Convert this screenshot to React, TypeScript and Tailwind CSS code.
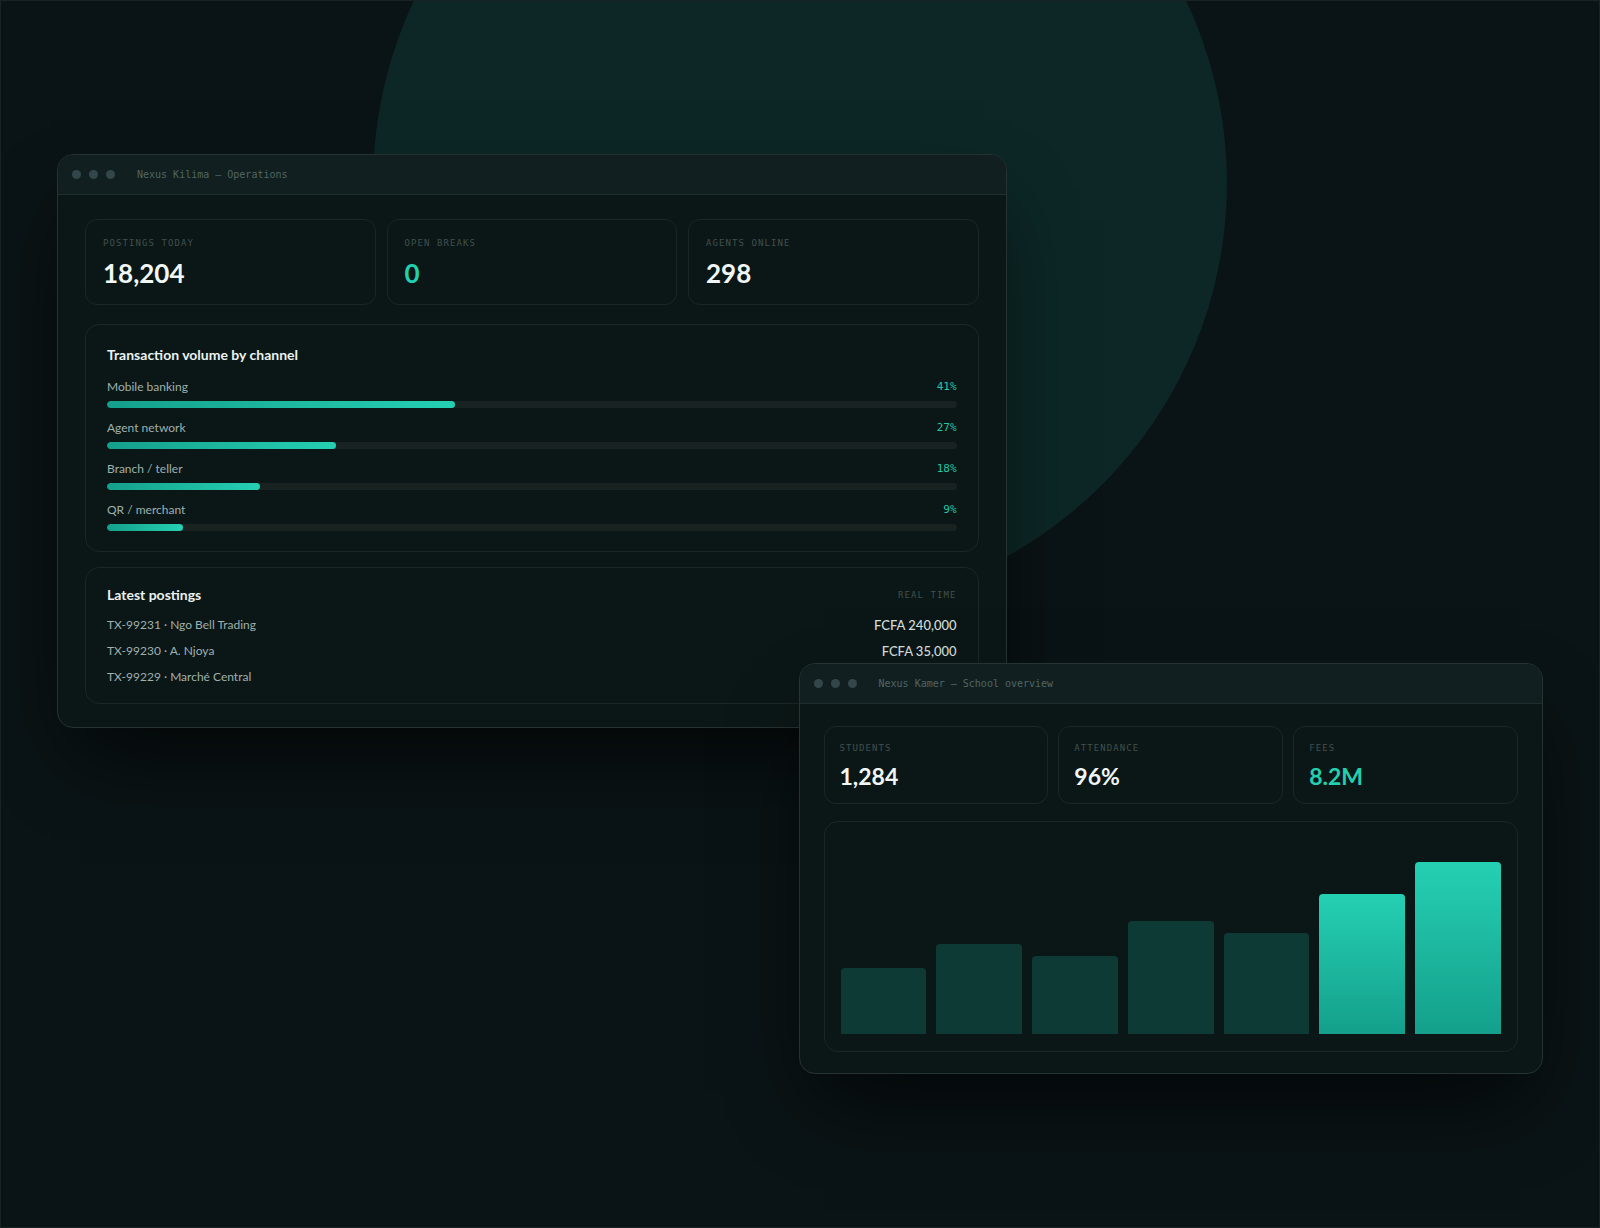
import type { ReactNode } from "react";
import clsx from "clsx";

interface WindowProps {
  title: string;
  className?: string;
  children: ReactNode;
}

interface StatProps {
  label: string;
  value: string;
  accent?: boolean;
  compact?: boolean;
}

const channels = [
  { name: "Mobile banking", share: 41 },
  { name: "Agent network", share: 27 },
  { name: "Branch / teller", share: 18 },
  { name: "QR / merchant", share: 9 },
];

const postings = [
  { id: "TX-99231", party: "Ngo Bell Trading", amount: "FCFA 240,000" },
  { id: "TX-99230", party: "A. Njoya", amount: "FCFA 35,000" },
  { id: "TX-99229", party: "Marché Central" },
];

const bars = [
  { height: 34 },
  { height: 46 },
  { height: 40 },
  { height: 58 },
  { height: 52 },
  { height: 72, active: true },
  { height: 88, active: true },
];

function Window({ title, className, children }: WindowProps) {
  return (
    <section
      className={clsx(
        "relative overflow-hidden rounded-2xl border border-[#253332] bg-[#0b1716] shadow-[0_40px_80px_-24px_rgba(0,0,0,0.8)]",
        className
      )}
    >
      <header className="flex h-10 items-center border-b border-[#1f2d2c] bg-[#121f20] px-[14px]">
        <div className="flex gap-2">
          <span className="size-[9px] rounded-full bg-[#33474a]" />
          <span className="size-[9px] rounded-full bg-[#33474a]" />
          <span className="size-[9px] rounded-full bg-[#33474a]" />
        </div>
        <h2 className="ml-[22px] font-['DejaVu_Sans_Mono',monospace] text-[10px] leading-4 text-[#4f6663]">
          {title}
        </h2>
      </header>
      {children}
    </section>
  );
}

function Stat({ label, value, accent, compact }: StatProps) {
  return (
    <div
      className={clsx(
        "flex flex-1 flex-col gap-[10px] rounded-xl border border-[#1a2726]",
        compact ? "p-[15px]" : "p-[17px]"
      )}
    >
      <dt className="font-['DejaVu_Sans_Mono',monospace] text-[9px] leading-3 tracking-[0.12em] text-[#40504e] uppercase">
        {label}
      </dt>
      <dd
        className={clsx(
          "font-bold",
          compact ? "text-[23px] leading-6" : "text-[26px] leading-7",
          accent ? "text-[#22d0b0]" : "text-[#f1f7f6]"
        )}
      >
        {value}
      </dd>
    </div>
  );
}

function Channel({ name, share }: { name: string; share: number }) {
  return (
    <li>
      <div className="flex justify-between text-xs leading-[18px]">
        <span className="text-[#9fb0ae]">{name}</span>
        <span className="font-['DejaVu_Sans_Mono',monospace] text-[11px] text-[#20c7a9]">
          {share}%
        </span>
      </div>
      <div className="mt-[5px] h-[7px] overflow-hidden rounded-full bg-[#172221]">
        <div
          className="h-full rounded-full bg-linear-to-r from-[#14a08b] to-[#25d0b2]"
          style={{ width: `${share}%` }}
        />
      </div>
    </li>
  );
}

export default function App() {
  return (
    <main className="relative flex min-h-screen flex-col overflow-hidden border border-[#182424] bg-[#0a1315] px-14 py-[153px] font-['Lato',sans-serif]">
      <div className="absolute top-[-20%] left-1/2 aspect-square w-[854px] -translate-x-1/2 rounded-full bg-[#0c2726]" />

      <Window title="Nexus Kilima — Operations" className="w-[63.9%]">
        <div className="px-[27px] pt-6 pb-[23px]">
          <dl className="flex gap-[11px]">
            <Stat label="Postings today" value="18,204" />
            <Stat label="Open breaks" value="0" accent />
            <Stat label="Agents online" value="298" />
          </dl>

          <div className="mt-[19px] rounded-[14px] border border-[#1a2726] px-[21px] py-5">
            <h3 className="text-sm leading-5 font-bold text-[#eaf2f1]">
              Transaction volume by channel
            </h3>
            <ul className="mt-[13px] flex flex-col gap-[11px]">
              {channels.map((channel) => (
                <Channel key={channel.name} {...channel} />
              ))}
            </ul>
          </div>

          <div className="mt-[15px] rounded-[14px] border border-[#1a2726] px-[21px] pt-[17px] pb-4">
            <div className="flex items-center justify-between">
              <h3 className="text-sm leading-5 font-bold text-[#eaf2f1]">Latest postings</h3>
              <span className="font-['DejaVu_Sans_Mono',monospace] text-[9px] leading-3 tracking-[0.12em] text-[#40504e] uppercase">
                Real time
              </span>
            </div>
            <ul className="mt-[10px] flex flex-col gap-[6px]">
              {postings.map(({ id, party, amount }) => (
                <li key={id} className="flex justify-between text-xs leading-5">
                  <span className="text-[#9fb0ae]">
                    {id} · {party}
                  </span>
                  {amount && (
                    <span className="text-[13px] font-medium text-[#d3dedc]">{amount}</span>
                  )}
                </li>
              ))}
            </ul>
          </div>
        </div>
      </Window>

      <Window title="Nexus Kamer — School overview" className="-mt-[65px] w-[50.1%] self-end">
        <div className="px-6 pt-[22px] pb-[21px]">
          <dl className="flex gap-[10px]">
            <Stat label="Students" value="1,284" compact />
            <Stat label="Attendance" value="96%" compact />
            <Stat label="Fees" value="8.2M" accent compact />
          </dl>

          <div className="mt-[17px] rounded-[14px] border border-[#1a2726] px-4 py-[17px]">
            <div className="flex h-[195px] items-end gap-[10px]">
              {bars.map((bar, i) => (
                <div
                  key={i}
                  className={clsx(
                    "flex-1 rounded-t-[4px]",
                    bar.active ? "bg-linear-to-b from-[#25d0b2] to-[#14a08b]" : "bg-[#0d3a34]"
                  )}
                  style={{ height: `${bar.height}%` }}
                />
              ))}
            </div>
          </div>
        </div>
      </Window>
    </main>
  );
}
